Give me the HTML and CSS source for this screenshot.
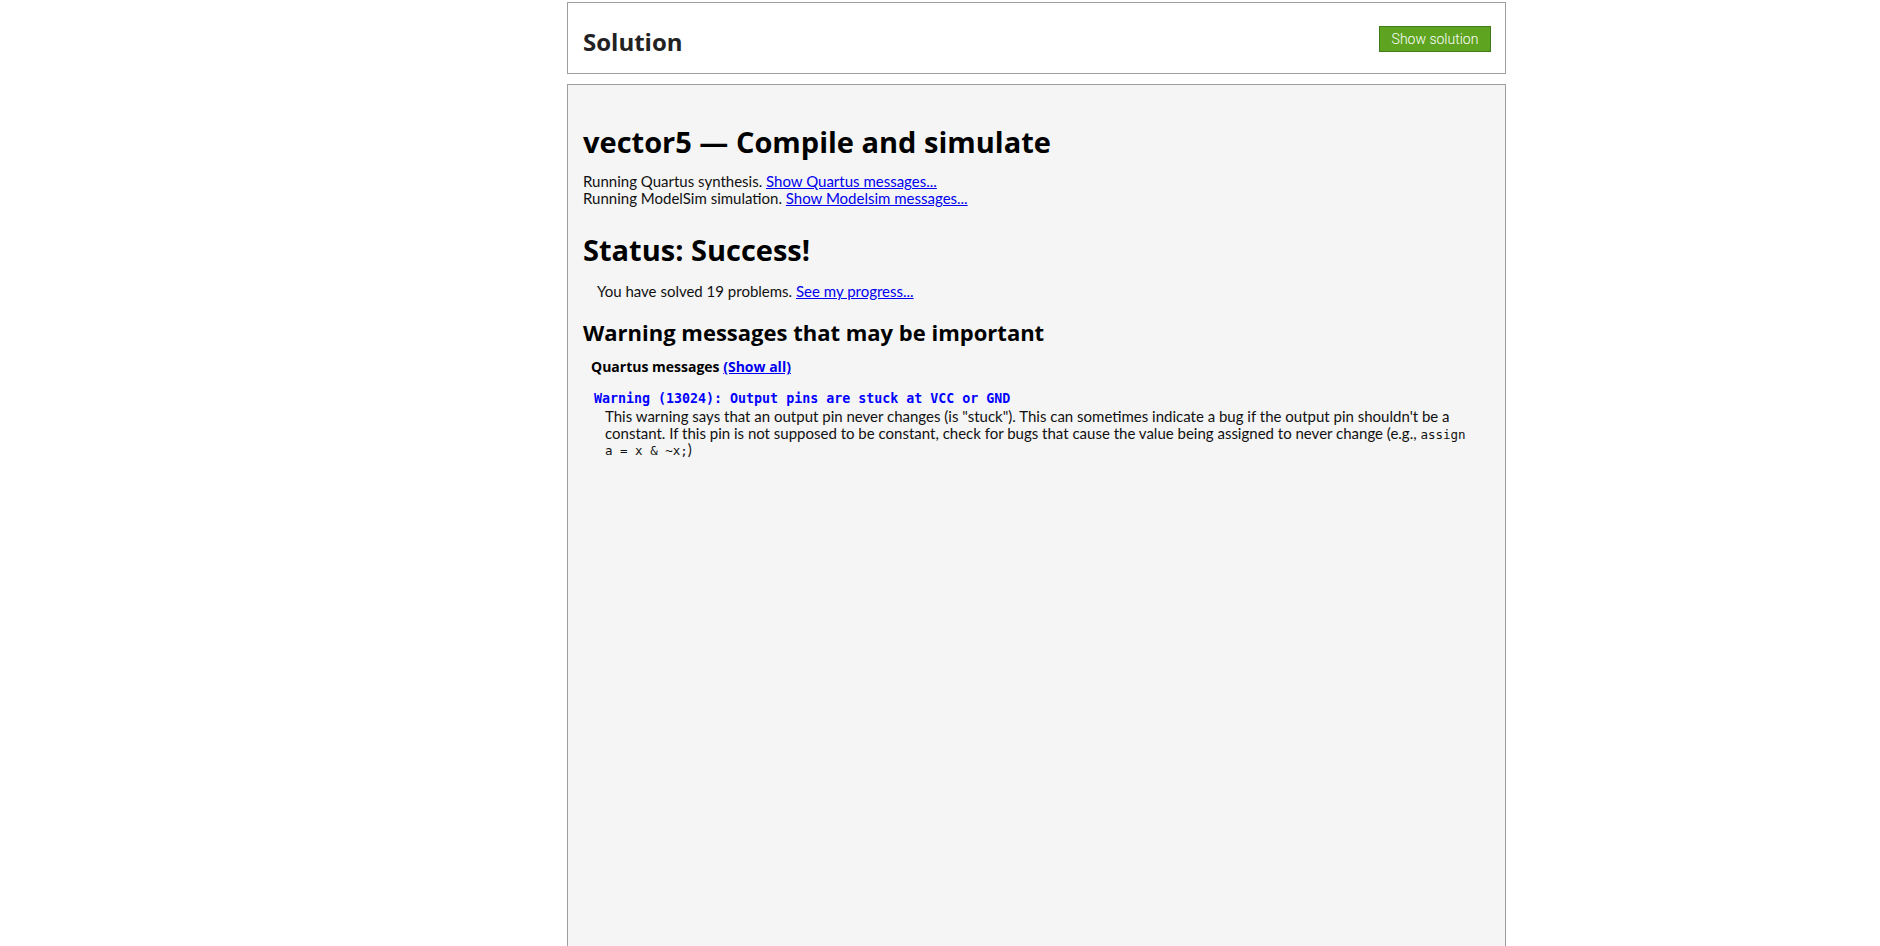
FILE: index.html
```html
<!DOCTYPE html>
<html>
<head>
<meta charset="utf-8">
<title>vector5 — Compile and simulate</title>
<link rel="stylesheet" href="styles.css">
</head>
<body>
<div class="page">
  <div class="panel solution-panel">
    <h2 class="solution-title">Solution</h2>
    <button class="btn-show">Show solution</button>
  </div>
  <div class="panel result-panel">
    <h1 class="title">vector5 — Compile and simulate</h1>
    <div class="runlines">
      <div>Running Quartus synthesis. <a href="#">Show Quartus messages...</a></div>
      <div>Running ModelSim simulation. <a href="#">Show Modelsim messages...</a></div>
    </div>
    <h2 class="status">Status: Success!</h2>
    <p class="solved">You have solved 19 problems. <a href="#">See my progress...</a></p>
    <h3 class="warn-title">Warning messages that may be important</h3>
    <div class="msg-head">Quartus messages <a href="#">(Show all)</a></div>
    <div class="warn-code">Warning (13024): Output pins are stuck at VCC or GND</div>
    <p class="warn-text">This warning says that an output pin never changes (is "stuck"). This can sometimes indicate a bug if the output pin shouldn't be a constant. If this pin is not supposed to be constant, check for bugs that cause the value being assigned to never change (e.g., <code>assign a = x &amp; ~x;</code>)</p>
  </div>
</div>
</body>
</html>
```

FILE: styles.css
```css
html, body {
  margin: 0;
  padding: 0;
  background: #ffffff;
  overflow: hidden;
}
body {
  font-family: "Lato", "Roboto", sans-serif;
  color: #111;
}
.page {
  padding: 2px 0 0 567px;
  width: 939px;
}
.panel {
  border: 1px solid #9e9e9e;
  box-sizing: border-box;
  width: 939px;
}
.solution-panel {
  background: #ffffff;
  height: 72px;
  display: flex;
  justify-content: space-between;
  align-items: flex-start;
  padding: 0 14px 0 15px;
}
.solution-title {
  margin: 24px 0 0 0;
  font-family: "Open Sans", sans-serif;
  font-weight: 700;
  font-size: 24px;
  line-height: 30px;
  color: #222;
}
.btn-show {
  margin-top: 23px;
  width: 112px;
  height: 26px;
  background: #5ea421;
  border: 1px solid #3f7c16;
  color: #fff;
  font-family: "Roboto", sans-serif;
  font-weight: 300;
  font-size: 14px;
  padding: 0;
  border-radius: 0;
}
.result-panel {
  margin-top: 10px;
  background: #f5f5f5;
  height: 900px;
  padding: 0 16px 0 15px;
  overflow: hidden;
}
.title {
  margin: 39px 0 0 0;
  font-family: "Open Sans", sans-serif;
  font-weight: 700;
  font-size: 29px;
  line-height: 36px;
  color: #000;
}
.runlines {
  margin-top: 13px;
  font-size: 15px;
  line-height: 17px;
}
a {
  color: #0000ee;
  text-decoration: underline;
}
.status {
  margin: 25px 0 0 0;
  font-family: "Open Sans", sans-serif;
  font-weight: 700;
  font-size: 29px;
  line-height: 36px;
  color: #000;
}
.solved {
  margin: 15px 0 0 0;
  padding-left: 14px;
  font-size: 15px;
  line-height: 17px;
}
.warn-title {
  margin: 18px 0 0 0;
  font-family: "Open Sans", sans-serif;
  font-weight: 700;
  font-size: 22px;
  line-height: 28px;
  color: #000;
}
.msg-head {
  margin-top: 13px;
  padding-left: 8px;
  font-family: "Open Sans", sans-serif;
  font-weight: 700;
  font-size: 14px;
  line-height: 16px;
  color: #000;
}
.warn-code {
  margin-top: 16px;
  padding-left: 11px;
  font-family: "DejaVu Sans Mono", monospace;
  font-weight: 700;
  font-size: 13.3px;
  line-height: 16px;
  color: #0000ff;
}
.warn-text {
  margin: 1px 0 0 0;
  padding-left: 22px;
  padding-right: 14px;
  font-size: 15px;
  line-height: 16.5px;
}
.warn-text code {
  font-family: "DejaVu Sans Mono", monospace;
  font-size: 12.5px;
  line-height: 1;
}
```
